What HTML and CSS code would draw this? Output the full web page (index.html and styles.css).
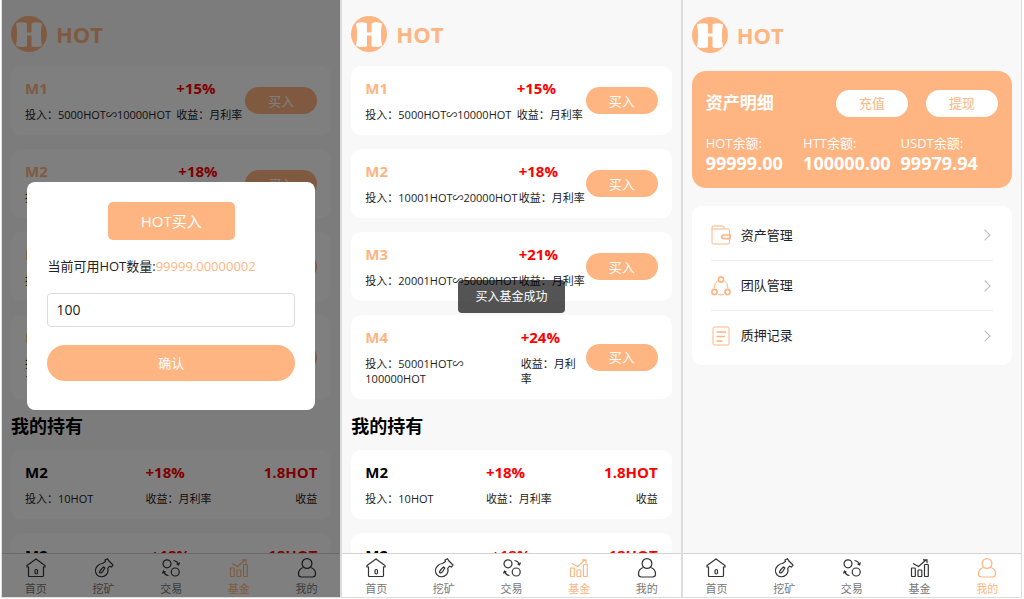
FILE: index.html
```html
<!DOCTYPE html>
<html lang="zh-CN">
<head>
<meta charset="UTF-8">
<meta name="viewport" content="width=device-width, initial-scale=1.0">
<title>HOT</title>
<link rel="stylesheet" href="styles.css">
</head>
<body>

<!-- shared icons -->
<svg class="sprite" aria-hidden="true">
    <symbol id="logo" viewBox="0 0 36 36">
        <circle cx="18" cy="18" r="18" fill="#ffb582"/>
        <path fill="#fff" d="M5 7.500Q10 5.500 15.500 7L16 8V16.500H20.500V8L21 7Q26 5.500 31 7.500Q28.800 18 31 30Q26 31.500 21 30.500L20.500 29.500V19.500H16V29.500L15.500 30.500Q10 31.500 5 30Q7.200 18 5 7.500Z"/>
    </symbol>
    <symbol id="home" viewBox="0 0 20 20">
        <path d="M1 7.500 10 1l9 6.500v1.500h-1.500V17.500q0 1-1 1h-13q-1 0-1-1V9H1z"/>
        <rect x="9" y="11.500" width="2.500" height="4.500" rx="1.200"/>
    </symbol>
    <symbol id="mine" viewBox="0 0 20 20">
        <path d="M8.500 5.500 11.500 3.500 11 2l2.500-1.200L15 3l4 4-1.500 2-2-.8-1.800 2.300c1 3-.2 5-1.700 6.500-3 2.500-7 2.200-9-.2s-2.200-6 .5-8.800C5 6.300 6.500 5.500 8.500 5.500z"/>
        <path d="M5.500 14.500q0-2 4-5.500l1.300 1q-2 4-3.800 5z"/>
    </symbol>
    <symbol id="trade" viewBox="0 0 20 20">
        <circle cx="6" cy="5.800" r="4"/>
        <circle cx="14.200" cy="14" r="4"/>
        <path d="M12.500 2.500q4 .5 5 4.500m-2-1 2 1 1-2.500M7.500 17.500q-4-.5-5-4.500m2 1-2-1-1 2.500"/>
    </symbol>
    <symbol id="fund" viewBox="0 0 20 20">
        <rect x="1.500" y="10" width="3.800" height="8.500" rx=".5"/>
        <rect x="8" y="12" width="3.800" height="6.500" rx=".5"/>
        <rect x="14.500" y="6.500" width="3.800" height="12" rx=".5"/>
        <path d="M3 5.500l5.500 3 7.500-6.500M13 1.800h4v3.500"/>
    </symbol>
    <symbol id="user" viewBox="0 0 20 20">
        <circle cx="10" cy="5.500" r="4.900"/>
        <path d="M6.500 9.500C3 10.500 1.500 13 1.500 16q0 3 3 3h11q3 0 3-3c0-3-1.500-5.500-5-6.500"/>
    </symbol>
    <symbol id="wallet" viewBox="0 0 20 20">
        <path d="M1 4V2q0-1 1-1h10q1 0 1 1v2M1 4h16q1.500 0 1.500 1.500V17.500q0 1.500-1.500 1.500H2.500Q1 19 1 17.500z"/>
        <path class="thick" d="M19 10h-6.500q-1.800 0-1.800 1.800t1.800 1.800H19z"/>
    </symbol>
    <symbol id="team" viewBox="0 0 20 20">
        <path d="M7 4.500Q3 7 3 12.500M13 4.500q4 2.500 4 8M7 18.500q3 1 6 0"/>
        <g class="thick"><circle cx="10" cy="3.500" r="2.600"/><circle cx="3.500" cy="16" r="2.600"/><circle cx="16.500" cy="16" r="2.600"/></g>
    </symbol>
    <symbol id="record" viewBox="0 0 20 20">
        <rect x="2" y="1" width="16" height="18" rx="1.500"/>
        <path class="thick" d="M5.500 6h9.500M5.500 10.500h8.500M5.500 15h6"/>
    </symbol>
</svg>

<main class="screens">

    <!-- buy dialog -->
    <section class="phone">
        <div class="content">
            <header class="brand"><svg class="logo"><use href="#logo"/></svg><h1>HOT</h1></header>
            <article class="card fund">
                <div class="fund-info">
                    <div><h3>M1</h3><p>投入：5000HOT∽10000HOT</p></div>
                    <div class="rate"><b>+15%</b><p>收益：月利率</p></div>
                </div>
                <button class="pill">买入</button>
            </article>
            <article class="card fund">
                <div class="fund-info">
                    <div><h3>M2</h3><p>投入：10001HOT∽20000HOT</p></div>
                    <div class="rate"><b>+18%</b><p>收益：月利率</p></div>
                </div>
                <button class="pill">买入</button>
            </article>
            <article class="card fund">
                <div class="fund-info">
                    <div><h3>M3</h3><p>投入：20001HOT∽50000HOT</p></div>
                    <div class="rate"><b>+21%</b><p>收益：月利率</p></div>
                </div>
                <button class="pill">买入</button>
            </article>
            <article class="card fund">
                <div class="fund-info wrap">
                    <div><h3>M4</h3><p>投入：50001HOT∽<wbr>100000HOT</p></div>
                    <div class="rate"><b>+24%</b><p>收益：月利率</p></div>
                </div>
                <button class="pill">买入</button>
            </article>
            <h2>我的持有</h2>
            <article class="card held">
                <div><h3>M2</h3><p>投入：10HOT</p></div>
                <div class="rate"><b>+18%</b><p>收益：月利率</p></div>
                <div class="rate earned"><b>1.8HOT</b><p>收益</p></div>
            </article>
            <article class="card held">
                <div><h3>M2</h3><p>投入：100HOT</p></div>
                <div class="rate"><b>+18%</b><p>收益：月利率</p></div>
                <div class="rate earned"><b>18HOT</b><p>收益</p></div>
            </article>
        </div>
        <nav class="tabs">
            <a href="#"><svg><use href="#home"/></svg>首页</a>
            <a href="#"><svg><use href="#mine"/></svg>挖矿</a>
            <a href="#"><svg><use href="#trade"/></svg>交易</a>
            <a href="#" class="active"><svg><use href="#fund"/></svg>基金</a>
            <a href="#"><svg><use href="#user"/></svg>我的</a>
        </nav>
        <div class="overlay">
            <form class="dialog">
                <h4>HOT买入</h4>
                <label for="amount">当前可用HOT数量:<span>99999.00000002</span></label>
                <input type="text" id="amount" value="100">
                <button type="button" class="confirm">确认</button>
            </form>
        </div>
    </section>

    <!-- fund list -->
    <section class="phone">
        <div class="content">
            <header class="brand"><svg class="logo"><use href="#logo"/></svg><h1>HOT</h1></header>
            <article class="card fund">
                <div class="fund-info">
                    <div><h3>M1</h3><p>投入：5000HOT∽10000HOT</p></div>
                    <div class="rate"><b>+15%</b><p>收益：月利率</p></div>
                </div>
                <button class="pill">买入</button>
            </article>
            <article class="card fund">
                <div class="fund-info">
                    <div><h3>M2</h3><p>投入：10001HOT∽20000HOT</p></div>
                    <div class="rate"><b>+18%</b><p>收益：月利率</p></div>
                </div>
                <button class="pill">买入</button>
            </article>
            <article class="card fund">
                <div class="fund-info">
                    <div><h3>M3</h3><p>投入：20001HOT∽50000HOT</p></div>
                    <div class="rate"><b>+21%</b><p>收益：月利率</p></div>
                </div>
                <button class="pill">买入</button>
            </article>
            <article class="card fund">
                <div class="fund-info wrap">
                    <div><h3>M4</h3><p>投入：50001HOT∽<wbr>100000HOT</p></div>
                    <div class="rate"><b>+24%</b><p>收益：月利率</p></div>
                </div>
                <button class="pill">买入</button>
            </article>
            <h2>我的持有</h2>
            <article class="card held">
                <div><h3>M2</h3><p>投入：10HOT</p></div>
                <div class="rate"><b>+18%</b><p>收益：月利率</p></div>
                <div class="rate earned"><b>1.8HOT</b><p>收益</p></div>
            </article>
            <article class="card held">
                <div><h3>M2</h3><p>投入：100HOT</p></div>
                <div class="rate"><b>+18%</b><p>收益：月利率</p></div>
                <div class="rate earned"><b>18HOT</b><p>收益</p></div>
            </article>
        </div>
        <nav class="tabs">
            <a href="#"><svg><use href="#home"/></svg>首页</a>
            <a href="#"><svg><use href="#mine"/></svg>挖矿</a>
            <a href="#"><svg><use href="#trade"/></svg>交易</a>
            <a href="#" class="active"><svg><use href="#fund"/></svg>基金</a>
            <a href="#"><svg><use href="#user"/></svg>我的</a>
        </nav>
        <div class="toast-layer"><div class="toast" role="status">买入基金成功</div></div>
    </section>

    <!-- account -->
    <section class="phone account">
        <div class="content">
            <header class="brand"><svg class="logo"><use href="#logo"/></svg><h1>HOT</h1></header>
            <article class="assets">
                <div class="assets-head">
                    <h2>资产明细</h2>
                    <button class="pill light">充值</button>
                    <button class="pill light">提现</button>
                </div>
                <div class="balances">
                    <p>HOT余额:<b>99999.00</b></p>
                    <p>HTT余额:<b>100000.00</b></p>
                    <p>USDT余额:<b>99979.94</b></p>
                </div>
            </article>
            <div class="card menu">
                <a href="#"><svg><use href="#wallet"/></svg><span>资产管理</span></a>
                <a href="#"><svg><use href="#team"/></svg><span>团队管理</span></a>
                <a href="#"><svg><use href="#record"/></svg><span>质押记录</span></a>
            </div>
        </div>
        <nav class="tabs">
            <a href="#"><svg><use href="#home"/></svg>首页</a>
            <a href="#"><svg><use href="#mine"/></svg>挖矿</a>
            <a href="#"><svg><use href="#trade"/></svg>交易</a>
            <a href="#"><svg><use href="#fund"/></svg>基金</a>
            <a href="#" class="active"><svg><use href="#user"/></svg>我的</a>
        </nav>
    </section>

</main>

</body>
</html>
```
FILE: styles.css
```css
* {
    box-sizing: border-box;
    margin: 0;
    padding: 0;
}
body {
    background: #fff;
    color: #222;
    font-family: "Open Sans", "Noto Sans CJK SC", sans-serif;
    font-size: 11px;
    line-height: 15px;
}
a {
    color: inherit;
    text-decoration: none;
}
button {
    border: none;
    font-family: inherit;
    cursor: pointer;
}
svg {
    display: block;
    fill: none;
    stroke: currentColor;
}
.sprite {
    position: absolute;
    width: 0;
    height: 0;
}

/* phones */
.screens {
    display: grid;
    grid-template-columns: repeat(3, 1fr);
    height: 100vh;
    padding: 0 2px 1px 1px;
}
.phone {
    position: relative;
    display: flex;
    flex-direction: column;
    min-width: 0;
    min-height: 0;
    background: #f8f8f8;
    border: 1px solid #ddd;
    border-top: none;
}
.content {
    flex: 1;
    min-height: 0;
    overflow: hidden;
    padding: 16px 9px 0;
}
.brand {
    display: flex;
    align-items: center;
    gap: 9px;
    margin-bottom: 14px;
    color: #ffb582;
}
.logo {
    width: 36px;
    height: 36px;
    stroke: none;
}
h1 {
    font-size: 22px;
    line-height: 36px;
}
.content > h2 {
    margin-bottom: 11px;
    color: #000;
    font-size: 18px;
    line-height: 26px;
}

/* cards */
.card {
    margin-bottom: 14px;
    background: #fff;
    border-radius: 10px;
}
.fund, .held {
    display: flex;
    align-items: center;
    justify-content: space-between;
    padding: 13px 14px;
    white-space: nowrap;
}
h3, .rate b {
    display: block;
    margin-bottom: 10px;
    font-size: 15px;
    line-height: 18px;
}
.fund h3 {
    color: #ffb582;
}
.held h3 {
    color: #000;
}
.rate b {
    color: #ff0000;
}
.earned {
    text-align: right;
}
.fund-info {
    display: flex;
    flex: 1;
    gap: 1px;
    justify-content: space-between;
    min-width: 0;
    margin-right: 3px;
}
.fund-info.wrap {
    gap: 36px;
    white-space: normal;
}
.wrap .rate {
    flex: none;
    width: 62px;
}
.pill {
    flex: none;
    width: 72px;
    height: 27px;
    background: #ffb582;
    border-radius: 14px;
    color: #fff;
    font-size: 13px;
    line-height: 20px;
}

/* bottom tabs */
.tabs {
    display: flex;
    height: 44px;
    background: #fff;
    border-top: 1px solid #d4d4d4;
    color: #333;
}
.tabs a {
    display: flex;
    flex: 1;
    flex-direction: column;
    align-items: center;
    gap: 3px;
    padding-top: 4px;
    color: #777;
}
.tabs svg {
    width: 20px;
    height: 20px;
    color: #333;
    stroke-width: 1.2;
}
.tabs .active, .tabs .active svg {
    color: #ffb582;
}

/* dialog */
.overlay {
    position: absolute;
    inset: 0;
    display: flex;
    align-items: center;
    justify-content: center;
    padding-bottom: 6px;
    background: rgba(0, 0, 0, 0.5);
}
.dialog {
    display: flex;
    flex-direction: column;
    width: 85%;
    padding: 20px 20px 29px;
    background: #fff;
    border-radius: 8px;
}
.dialog h4 {
    align-self: center;
    padding: 0 33px;
    background: #ffb582;
    border-radius: 5px;
    color: #fff;
    font-size: 15px;
    font-weight: normal;
    line-height: 38px;
}
.dialog label {
    margin: 16px 0 17px;
    font-size: 13px;
    line-height: 20px;
}
.dialog label span {
    color: #ffb582;
}
.dialog input {
    width: 100%;
    height: 34px;
    padding: 0 8px;
    border: 1px solid #dcdcdc;
    border-radius: 4px;
    color: #222;
    font-family: inherit;
    font-size: 14px;
}
.confirm {
    height: 36px;
    margin-top: 18px;
    background: #ffb582;
    border-radius: 18px;
    color: #fff;
    font-size: 13px;
}

/* toast */
.toast-layer {
    position: absolute;
    inset: 0;
    display: flex;
    align-items: center;
    justify-content: center;
    padding-bottom: 4px;
    pointer-events: none;
}
.toast {
    padding: 9px 17px;
    background: rgba(0, 0, 0, 0.67);
    border-radius: 4px;
    color: #fff;
    font-size: 12px;
}

/* account */
.account .brand {
    margin-bottom: 18px;
}
.account .content {
    padding-top: 17px;
}
.assets {
    margin-bottom: 18px;
    padding: 18px 14px 15px;
    background: #ffb582;
    border-radius: 14px;
    color: #fff;
}
.assets-head {
    display: flex;
    align-items: center;
    gap: 18px;
    margin-bottom: 16px;
}
.assets-head h2 {
    flex: 1;
    font-size: 17px;
    line-height: 28px;
}
.pill.light {
    background: #fff;
    color: #ffb582;
}
.balances {
    display: grid;
    grid-template-columns: repeat(3, 1fr);
    font-size: 13px;
    line-height: 20px;
}
.balances b {
    display: block;
    font-size: 18px;
}
.menu {
    padding: 4px 19px 5px;
}
.menu a {
    display: flex;
    align-items: center;
    gap: 10px;
    height: 50px;
    color: #222;
    font-size: 13px;
}
.menu a + a {
    border-top: 1px solid #eee;
}
.menu svg {
    width: 20px;
    height: 20px;
    color: #ffb582;
}
.thick {
    stroke-width: 1.6;
}
.menu a::after {
    content: "";
    width: 7px;
    height: 7px;
    margin: 0 4px 0 auto;
    border: solid #bbb;
    border-width: 1px 1px 0 0;
    transform: rotate(45deg);
}
```
